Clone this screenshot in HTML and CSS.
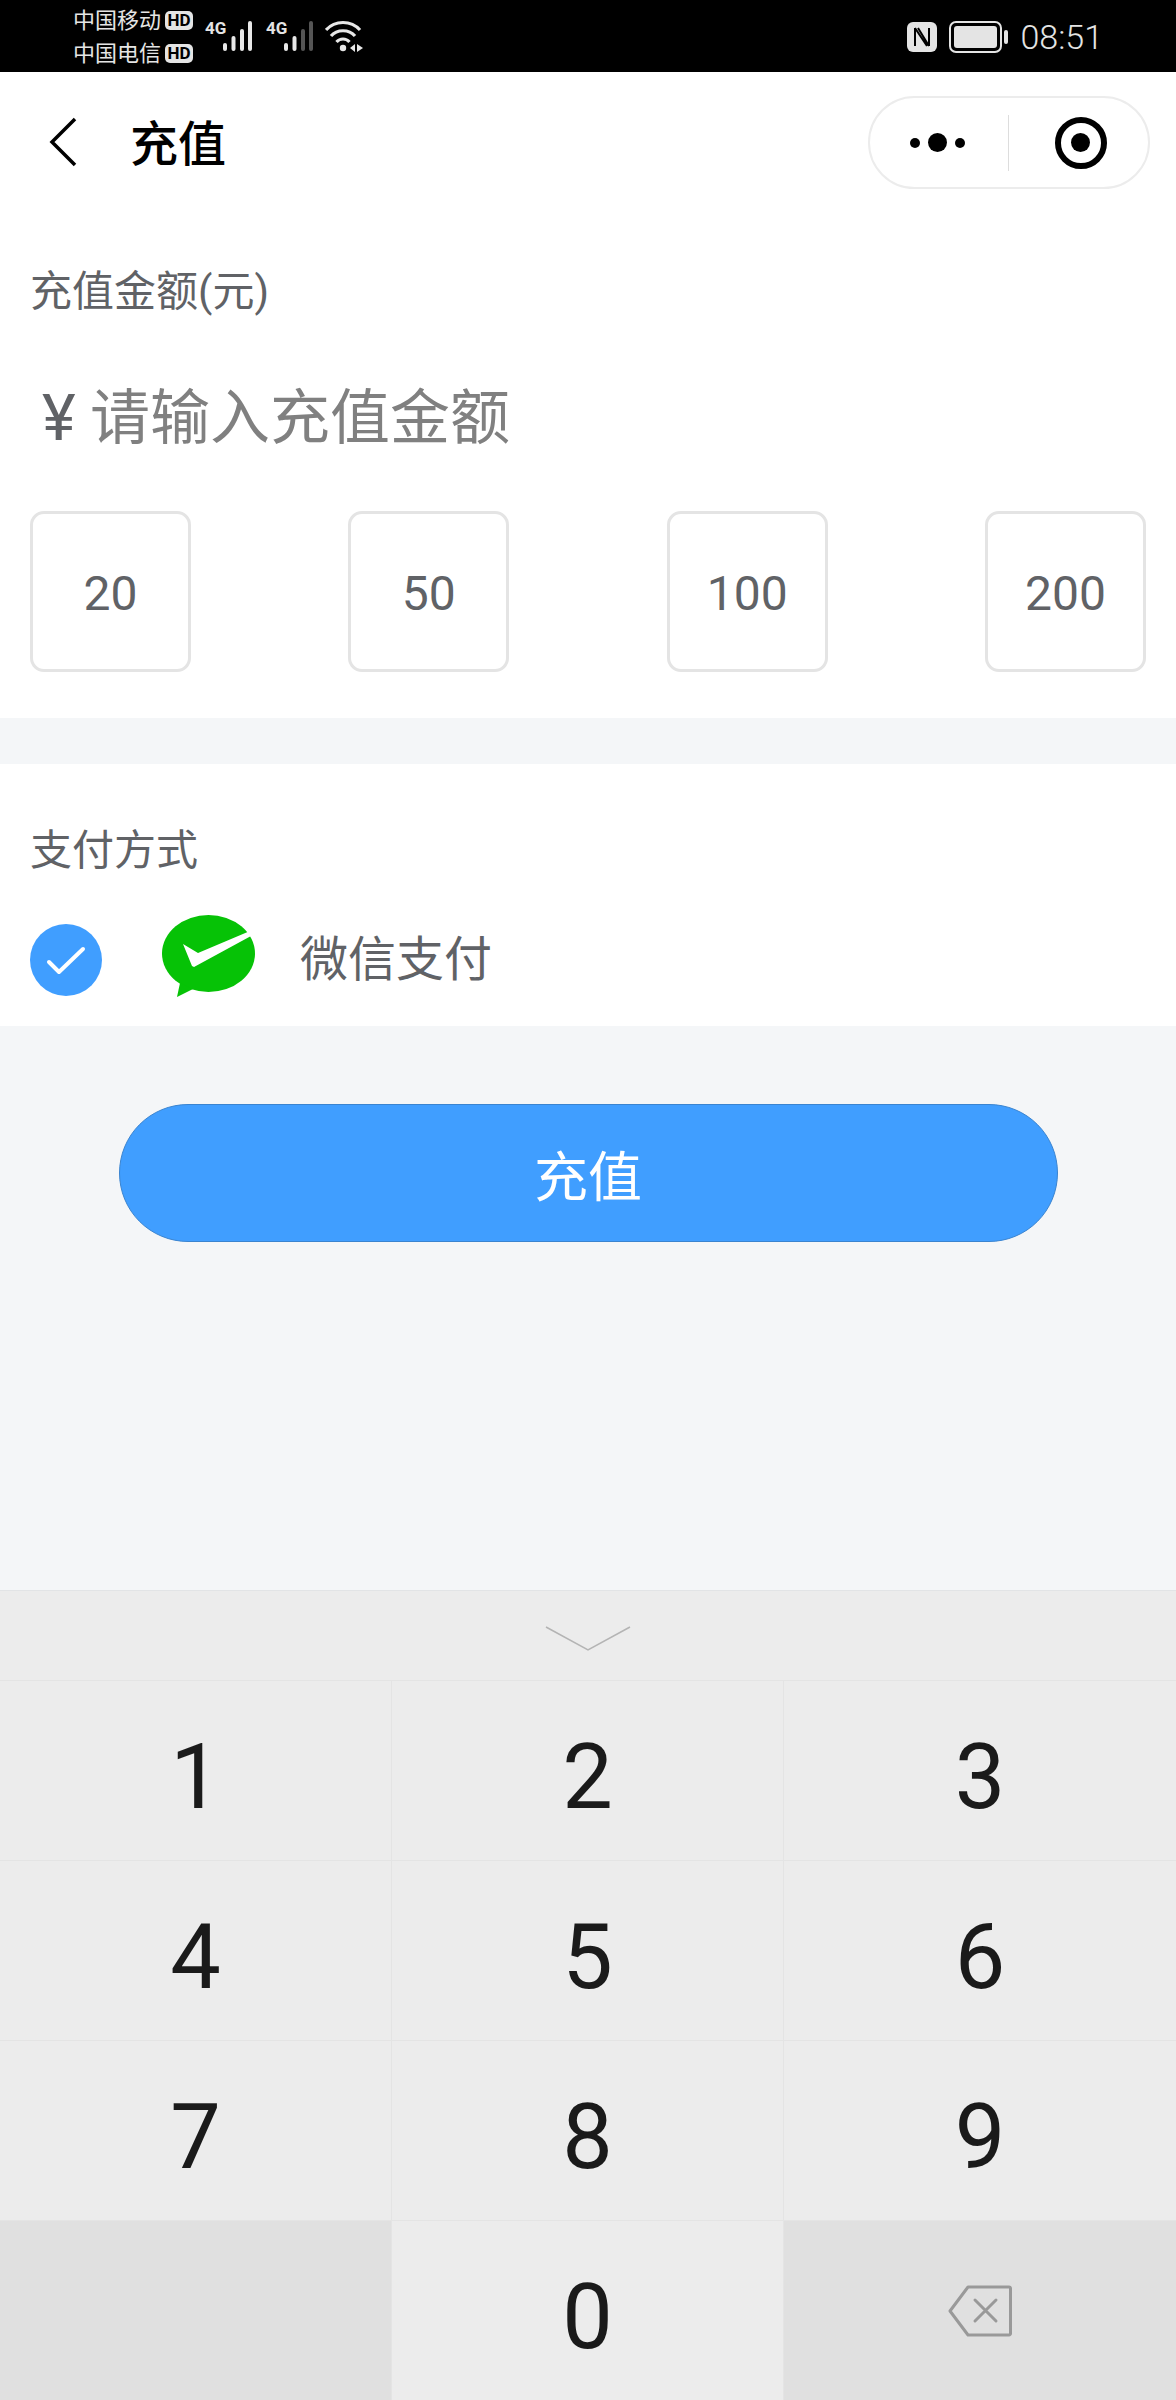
FILE: index.html
```html
<!DOCTYPE html>
<html lang="zh-CN">
<head>
  <meta charset="UTF-8">
  <meta name="viewport" content="width=device-width, initial-scale=1.0">
  <title>充值</title>
  <link rel="stylesheet" href="styles.css">
</head>
<body>
  <div class="statusbar">
    <div class="carriers">
      <div class="carrier"><span>中国移动</span><span class="hd">HD</span></div>
      <div class="carrier"><span>中国电信</span><span class="hd">HD</span></div>
    </div>
    <div class="signal">
      <span class="net">4G</span>
      <svg width="33" height="32" viewBox="0 0 33 32"><g fill="#e8e8e8"><rect x="1" y="23" width="4" height="8" rx="2"/><rect x="9.500" y="16" width="4" height="15" rx="2"/><rect x="18" y="9" width="4" height="22" rx="2"/><rect x="26" y="1" width="4" height="30" rx="2"/></g></svg>
    </div>
    <div class="signal">
      <span class="net">4G</span>
      <svg width="33" height="32" viewBox="0 0 33 32"><g fill="#e8e8e8"><rect x="1" y="23" width="4" height="8" rx="2"/><rect x="9.500" y="16" width="4" height="15" rx="2"/></g><g fill="#555"><rect x="18" y="9" width="4" height="22" rx="2"/><rect x="26" y="1" width="4" height="30" rx="2"/></g></svg>
    </div>
    <svg class="wifi" width="38" height="32" viewBox="0 0 38 32" fill="none" stroke="#e8e8e8" stroke-width="3.200">
      <path d="M1 10C10 0 26 0 35 10"/>
      <path d="M6 16C12 9 24 9 30 16"/>
      <path d="M11.500 22C15 18 21 18 24.500 22"/>
      <circle cx="18" cy="28" r="3.200" fill="#e8e8e8" stroke="none"/>
      <path d="M25 28l5-4v8zM32 24l6 4-6 4z" fill="#e8e8e8" stroke="none"/>
    </svg>
    <div class="status-right">
      <svg width="30" height="30" viewBox="0 0 30 30">
        <rect width="30" height="30" rx="6" fill="#e4e4e4"/>
        <path d="M8 24V6M22 24V6M8 6l12 18M11 6l11 18" fill="none" stroke="#000" stroke-width="2"/>
      </svg>
      <svg width="59" height="32" viewBox="0 0 59 32">
        <rect x="1" y="1" width="51" height="30" rx="6" fill="none" stroke="#e4e4e4" stroke-width="2"/>
        <rect x="5" y="5" width="43" height="22" rx="3" fill="#e4e4e4"/>
        <rect x="55" y="9" width="4" height="14" rx="2" fill="#e4e4e4"/>
      </svg>
      <span class="clock">08:51</span>
    </div>
  </div>

  <div class="navbar">
    <svg class="back" width="30" height="50" viewBox="0 0 30 50" fill="none" stroke="#000" stroke-width="3.500"><path d="M27 2L4 25l23 23"/></svg>
    <h1>充值</h1>
    <div class="capsule">
      <div class="capsule-more"><i></i><i class="big"></i><i></i></div>
      <div class="capsule-close"><i></i></div>
    </div>
  </div>

  <div class="panel amount-panel">
    <div class="label">充值金额(元)</div>
    <div class="amount-input"><span class="yen">¥</span><span class="placeholder">请输入充值金额</span></div>
    <div class="quick-list">
      <div class="quick">20</div>
      <div class="quick">50</div>
      <div class="quick">100</div>
      <div class="quick">200</div>
    </div>
  </div>

  <div class="panel pay-panel">
    <div class="label">支付方式</div>
    <div class="pay-row">
      <svg class="tick" width="72" height="72" viewBox="0 0 72 72"><circle cx="36" cy="36" r="36" fill="#409eff"/><path d="M19 38l10 10 24-23" fill="none" stroke="#fff" stroke-width="4" stroke-linecap="round" stroke-linejoin="round"/></svg>
      <svg class="wechat" width="94" height="84" viewBox="0 0 94 84">
        <ellipse cx="46.500" cy="38.500" rx="46.500" ry="38.500" fill="#06c206"/>
        <path d="M18 68l-3 14 16-8z" fill="#06c206"/>
        <path d="M21 29l15 9 52-22 1 5-57 31-2-1z" fill="#fff"/>
      </svg>
      <span class="pay-name">微信支付</span>
    </div>
  </div>

  <div class="action">
    <div class="submit">充值</div>
  </div>

  <div class="keyboard">
    <div class="key-top">
      <svg width="86" height="26" viewBox="0 0 86 26" fill="none" stroke="#b4b4b4" stroke-width="1.500"><path d="M1 1l42 23L85 1"/></svg>
    </div>
    <div class="keys">
      <div class="key">1</div>
      <div class="key">2</div>
      <div class="key">3</div>
      <div class="key">4</div>
      <div class="key">5</div>
      <div class="key">6</div>
      <div class="key">7</div>
      <div class="key">8</div>
      <div class="key">9</div>
      <div class="key dark"></div>
      <div class="key">0</div>
      <div class="key dark">
        <svg width="64" height="52" viewBox="0 0 64 52" fill="none" stroke="#999" stroke-width="3" stroke-linejoin="round" stroke-linecap="round">
          <path d="M20 2h41a1.500 1.500 0 0 1 1.500 1.500v45a1.500 1.500 0 0 1-1.500 1.500H20L2 26z"/>
          <path d="M27 15l21 21M48 15L27 36"/>
        </svg>
      </div>
    </div>
  </div>
</body>
</html>
```

FILE: styles.css
```css
* {
  box-sizing: border-box;
}

body {
  margin: 0;
  width: 1176px;
  height: 2400px;
  display: flex;
  flex-direction: column;
  overflow: hidden;
  background-color: #f4f6f8;
  font-family: "Roboto", "Noto Sans CJK SC", sans-serif;
  color: #606266;
}

/* status bar */
.statusbar {
  height: 72px;
  flex: none;
  background-color: #000;
  color: #e4e4e4;
  display: flex;
  align-items: center;
  padding-left: 73px;
  padding-right: 73px;
}

.carriers {
  width: 120px;
  margin-right: 12px;
  padding-top: 2px;
}

.carrier {
  height: 33px;
  display: flex;
  align-items: center;
  justify-content: space-between;
  font-size: 22px;
  line-height: 33px;
}

.hd {
  width: 28px;
  height: 19px;
  border-radius: 5px;
  background-color: #e4e4e4;
  color: #000;
  font-size: 17px;
  font-weight: 700;
  line-height: 19px;
  text-align: center;
}

.signal {
  display: flex;
  align-items: flex-start;
  width: 61px;
  height: 32px;
}

.net {
  width: 17px;
  font-family: "Liberation Sans Narrow", "Roboto", sans-serif;
  font-size: 17px;
  font-weight: 700;
  line-height: 17px;
}

.signal svg {
  flex: none;
}

.wifi {
  margin-left: -2px;
}

.status-right {
  margin-left: auto;
  display: flex;
  align-items: center;
  padding-top: 2px;
}

.status-right svg {
  margin-right: 12px;
}

.clock {
  font-size: 34px;
  font-weight: 300;
  line-height: 36px;
}

/* nav */
.navbar {
  height: 140px;
  flex: none;
  background-color: #fff;
  display: flex;
  align-items: center;
  padding-left: 48px;
  position: relative;
}

.back {
  flex: none;
}

.navbar h1 {
  margin: 5px 0 0 52px;
  font-size: 48px;
  font-weight: 500;
  color: #000;
  line-height: 60px;
}

.capsule {
  position: absolute;
  left: 868px;
  top: 24px;
  width: 282px;
  height: 93px;
  border: 2px solid #ececec;
  border-radius: 47px;
  display: flex;
  align-items: center;
}

.capsule-more {
  width: 139px;
  height: 56px;
  border-right: 1px solid #ddd;
  display: flex;
  align-items: center;
  justify-content: center;
  gap: 8px;
  padding-right: 3px;
}

.capsule-more i {
  width: 10px;
  height: 10px;
  border-radius: 50%;
  background-color: #000;
}

.capsule-more i.big {
  width: 19px;
  height: 19px;
}

.capsule-close {
  flex: 1;
  display: flex;
  justify-content: center;
  padding-left: 4px;
}

.capsule-close i {
  width: 52px;
  height: 52px;
  border: 6px solid #000;
  border-radius: 50%;
  display: flex;
  align-items: center;
  justify-content: center;
}

.capsule-close i::after {
  content: "";
  width: 19px;
  height: 19px;
  border-radius: 50%;
  background-color: #000;
}

/* panels */
.panel {
  background-color: #fff;
  padding-left: 30px;
  padding-right: 30px;
  flex: none;
}

.label {
  font-size: 42px;
  line-height: 50px;
}

.amount-panel {
  height: 506px;
  padding-top: 55px;
}

.amount-input {
  display: flex;
  align-items: center;
  height: 70px;
  margin-top: 60px;
  padding-left: 12px;
}

.yen {
  width: 48px;
  padding-top: 14px;
  font-size: 64px;
  line-height: 70px;
  color: #606266;
}

.placeholder {
  font-size: 60px;
  color: #808080;
}

.quick-list {
  display: flex;
  justify-content: space-between;
  margin-top: 64px;
}

.quick {
  width: 161px;
  height: 161px;
  border: 3px solid #e4e4e4;
  border-radius: 14px;
  display: flex;
  align-items: center;
  justify-content: center;
  padding-top: 4px;
  font-size: 48px;
  color: #606266;
}

.pay-panel {
  height: 262px;
  margin-top: 46px;
  padding-top: 62px;
}

.pay-row {
  display: flex;
  align-items: center;
  margin-top: 44px;
}

.wechat {
  margin-left: 60px;
  margin-top: -6px;
}

.pay-name {
  margin-left: 44px;
  padding-bottom: 10px;
  font-size: 48px;
  color: #606266;
}

/* button */
.action {
  flex: 1;
  padding-top: 78px;
}

.submit {
  width: 939px;
  height: 138px;
  margin: 0 auto;
  border: 1px solid #3a84d0;
  border-radius: 69px;
  background-color: #409eff;
  color: #fff;
  display: flex;
  align-items: center;
  justify-content: center;
  font-size: 54px;
}

/* keyboard */
.keyboard {
  height: 810px;
  flex: none;
  background-color: #ececec;
  border-top: 1px solid #e2e4e6;
  display: flex;
  flex-direction: column;
}

.key-top {
  height: 89px;
  display: flex;
  align-items: center;
  justify-content: center;
  padding-top: 6px;
}

.keys {
  flex: 1;
  display: grid;
  grid-template-columns: 391px 392px 1fr;
  grid-template-rows: repeat(4, 1fr);
}

.key {
  display: flex;
  align-items: center;
  justify-content: center;
  padding-top: 14px;
  border-top: 1px solid #e4e4e4;
  border-left: 1px solid #e4e4e4;
  font-size: 90px;
  color: #1a1a1a;
}

.key:nth-child(3n+1) {
  border-left: none;
}

.key.dark {
  background-color: #e0e0e0;
  padding-top: 0;
}
```
